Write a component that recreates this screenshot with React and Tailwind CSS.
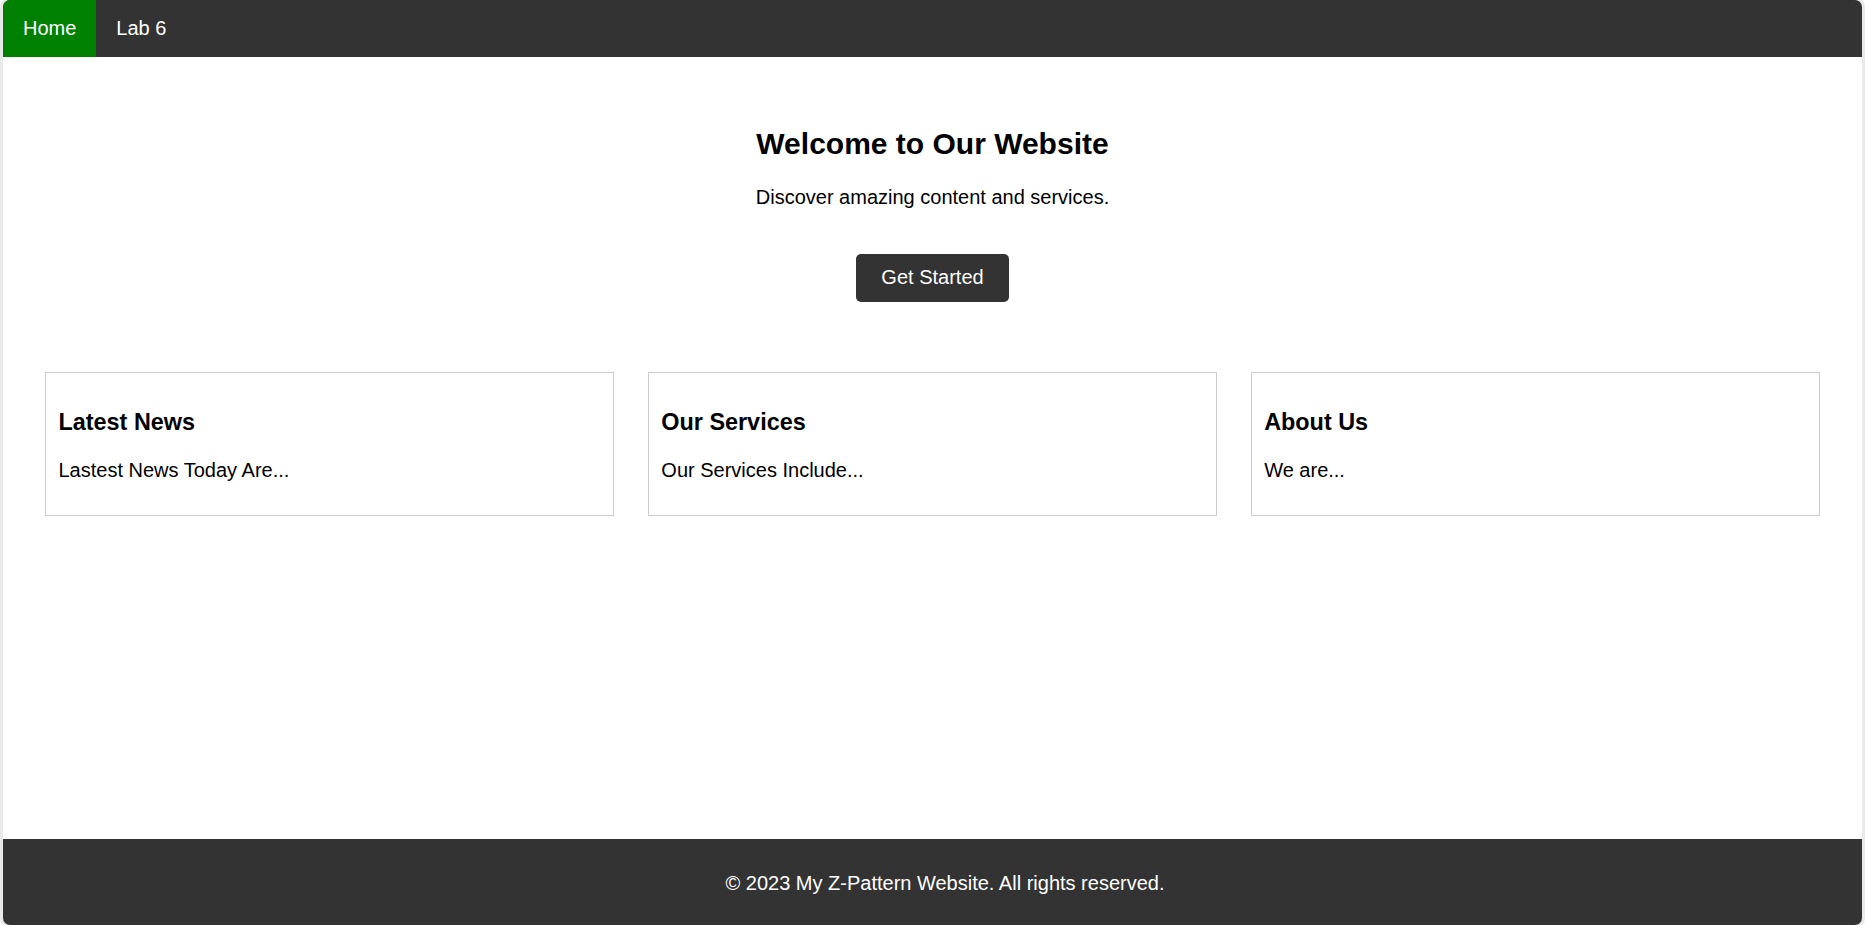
export default function App() {
  const cards = [
    { title: "Latest News", text: "Lastest News Today Are..." },
    { title: "Our Services", text: "Our Services Include..." },
    { title: "About Us", text: "We are..." },
  ];
  return (
    <div
      className="h-[925px] w-full bg-white px-[3px]"
      style={{ fontFamily: '"Liberation Sans", Arial, sans-serif' }}
    >
      <div className="flex h-full flex-col overflow-hidden rounded-[7px] bg-white shadow-[0_0_0_3px_#e9e9e9]">
        <nav className="flex h-[57px] shrink-0 bg-[#333333]">
          <a className="flex h-full items-center bg-[#008000] px-[20px] text-[20px] leading-[23px] text-white">
            Home
          </a>
          <a className="flex h-full items-center px-[20px] text-[20px] leading-[23px] text-white">
            Lab 6
          </a>
        </nav>

        <main className="flex-1">
          <section className="flex flex-col items-center pt-[69.8px] text-center text-black">
            <h2 className="text-[30px] font-bold leading-[34.5px]">
              Welcome to Our Website
            </h2>
            <p className="mt-[24.9px] text-[20px] leading-[23px]">
              Discover amazing content and services.
            </p>
            <button className="mt-[44.7px] rounded-[5px] bg-[#333333] px-[25px] py-[12.5px] text-[20px] leading-[23px] text-white">
              Get Started
            </button>
          </section>

          <section className="mt-[70px] flex gap-[33.5px] px-[42px]">
            {cards.map((c) => (
              <div
                key={c.title}
                className="flex-1 border border-[#cccccc] px-[12.5px] py-[12.5px] text-black"
              >
                <h3 className="mt-[23.4px] text-[23.4px] font-bold leading-[26.9px]">
                  {c.title}
                </h3>
                <p className="mt-[23.4px] mb-[20px] text-[20px] leading-[23px]">
                  {c.text}
                </p>
              </div>
            ))}
          </section>
        </main>

        <footer className="h-[86px] shrink-0 bg-[#333333] pl-[25px] pt-[32.5px] text-center text-[20px] leading-[23px] text-white">
          <p>© 2023 My Z-Pattern Website. All rights reserved.</p>
        </footer>
      </div>
    </div>
  );
}
